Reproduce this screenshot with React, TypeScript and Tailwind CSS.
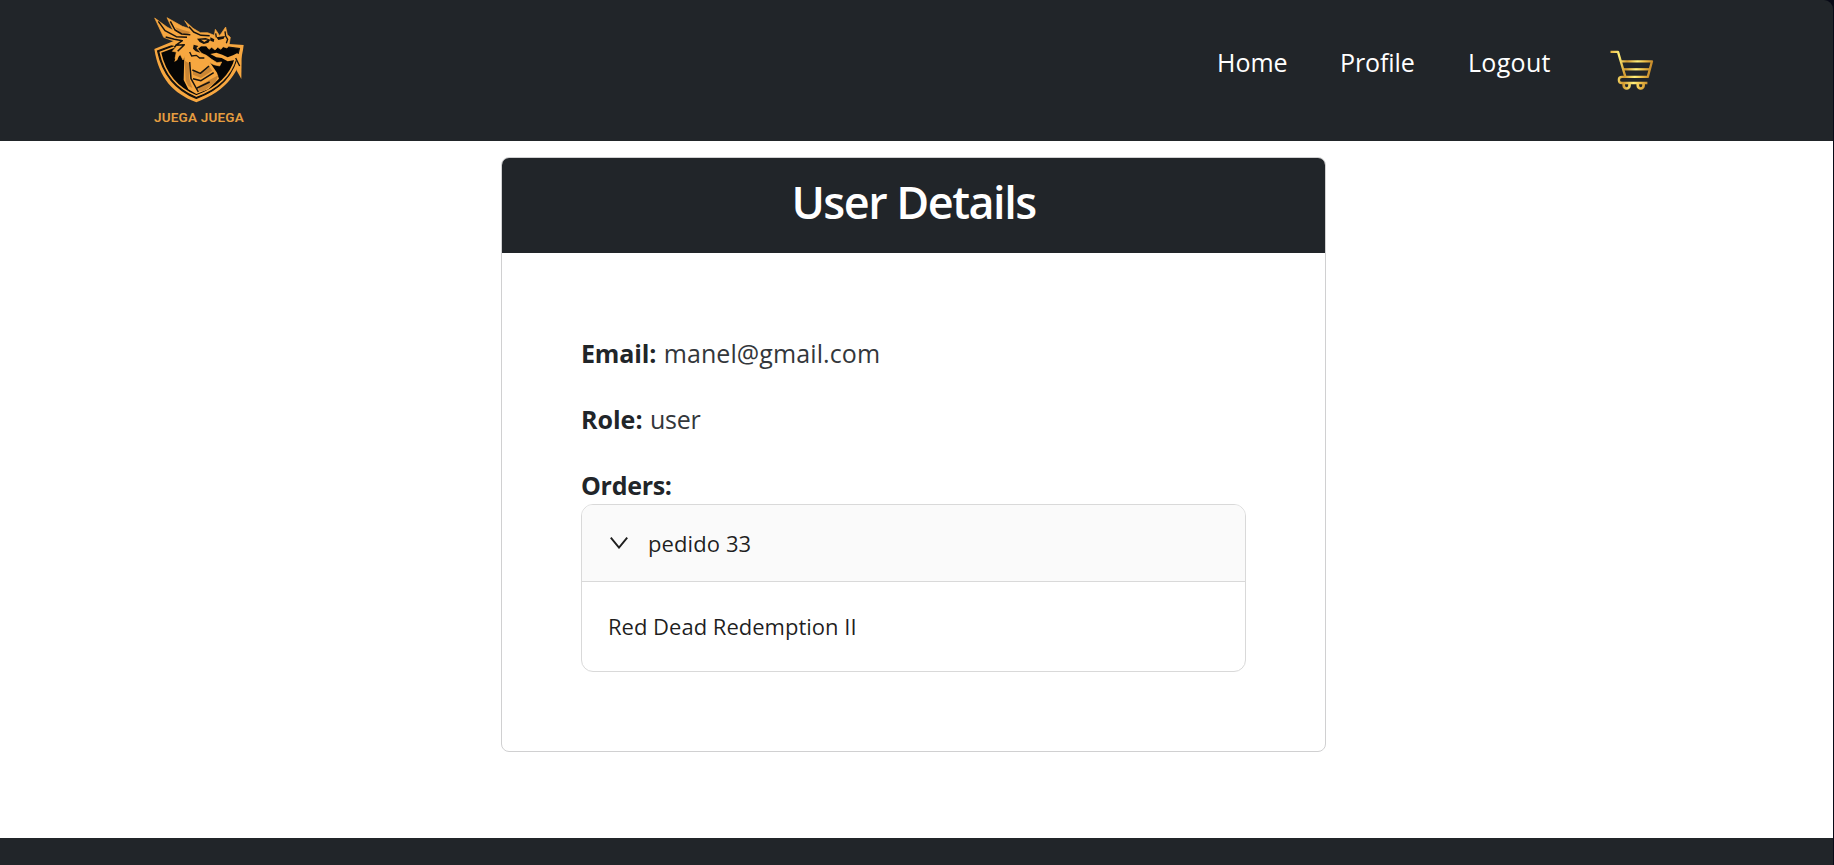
function DragonLogo({ className }: { className: string }) {
  return (
    <svg viewBox="0 0 270 258" className={className} role="img" aria-label="Juega Juega">
      <g transform="translate(-43 -37)">
        <path fill="#f7a740" d="M44 133 L100 110 L180 100 L268 118 L312 121 C304 200 262 258 170 293 C100 266 58 222 44 133 Z" />
        <path fill="#f7a740" d="M306 150 L305 223 L290 196 L284 160 Z" />
        <path
          fill="#050505"
          stroke="#16130f"
          strokeWidth="4"
          d="M108 119 L54 139 C69 208 108 256 170 281 C238 256 284 216 299 132 L272 128 L180 116 Z"
        />
        <path
          fill="none"
          stroke="#f7a740"
          strokeWidth="5"
          d="M104 127 L62 143 C76 206 112 250 170 274 C230 252 272 218 288 160"
        />
        <path fill="#f7a740" d="M134 150 L132 226 L146 254 L170 268 L206 254 L238 222 L232 204 L206 166 L178 160 Z" />
        <path fill="#c98534" d="M135 168 L148 176 L149 222 L158 250 L146 244 L138 228 Z M160 196 L182 206 L208 184 L218 198 L184 220 L160 210 Z M178 244 L216 222 L236 212 L228 232 L194 258 L176 260 Z" />
        <path
          fill="#f7a740"
          stroke="#f7a740"
          strokeWidth="2"
          d="M45 40 L82 67 L100 77 L82 39 L128 65 L150 72 L135 48 L160 71 L182 84 L204 84 L224 92 L227 74 L240 93 L258 67 L263 90 L272 98 L268 122 L262 130 L250 126 L244 134 L234 128 L226 136 L216 128 L208 134 L200 124 L184 124 L174 132 L186 146 L200 152 L216 164 L232 174 L246 172 L240 184 L222 180 L204 170 L192 174 L180 166 L166 172 L152 158 L146 172 L138 150 L130 166 L122 150 L106 162 L110 142 L98 140 L112 124 L92 120 L104 110 L72 98 Z"
        />
        <path fill="#f7a740" d="M212 148 L230 144 L248 150 L264 158 L280 152 L292 146 L302 150 L300 172 L286 166 L264 170 L246 160 L230 158 Z" />
        <path fill="#c98534" d="M106 68 L130 76 L152 82 L142 90 L122 86 Z" />
        <path
          fill="none"
          stroke="#16130f"
          strokeWidth="4.5"
          strokeLinejoin="round"
          d="M56 50 L76 78 L110 96 L142 98 M92 50 L106 76 L126 88 L152 90 M148 66 L162 82 L184 92 L210 93 M78 97 L104 104 L128 108 L108 122 L134 120 L114 140 M150 172 L154 222 L176 262 M158 196 L182 206 L208 184 M160 222 L184 228 L222 204 M172 250 L210 232"
        />
        <path fill="#16130f" d="M172 102 L198 100 L212 105 L206 114 L192 118 L180 112 Z M212 98 L224 104 L222 112 L212 108 Z M230 98 L256 94 L252 102 L236 106 Z M162 120 L176 124 L170 130 L182 144 L168 140 L160 132 Z" />
        <path fill="#f7a740" d="M184 105 L204 105 L194 112 Z" />
        <path fill="none" stroke="#16130f" strokeWidth="4" d="M256 80 L258 94 L264 104 L260 116 M228 86 L230 98 M288 160 L300 184 M150 142 L156 154 L170 152 L180 160 L194 160" />
        <path fill="#f7a740" d="M108 158 L119 150 L113 166 L104 172 Z" />
      </g>
    </svg>
  );
}

function CartIcon() {
  return (
    <svg viewBox="0 0 44 40" className="h-10 w-11" fill="none" role="img" aria-label="Cart">
      <defs>
        <linearGradient id="gold" x1="0" y1="0" x2="44" y2="8" gradientUnits="userSpaceOnUse">
          <stop offset="0" stopColor="#e5ad3a" />
          <stop offset="0.22" stopColor="#fff07a" />
          <stop offset="0.42" stopColor="#d39a30" />
          <stop offset="0.65" stopColor="#fff07a" />
          <stop offset="0.82" stopColor="#ecbb45" />
          <stop offset="1" stopColor="#c08428" />
        </linearGradient>
      </defs>
      <g stroke="url(#gold)" strokeWidth="2.3" strokeLinejoin="round">
        <path d="M0.5 1.9 H8 L15.4 26.8 M11 11.3 H42 L37.8 26.9 H12 C7.8 26.9 7.8 33 12 33 H37.4" />
        <path d="M13.2 19.3 H40" />
        <path d="M13.7 34 V35.6 A2.9 2.9 0 0 0 19.5 35.6 V34 M27.8 34 V35.6 A2.9 2.9 0 0 0 33.6 35.6 V34" strokeWidth="2.7" />
      </g>
    </svg>
  );
}

function Navbar() {
  return (
    <header className="flex h-[141px] justify-between rounded-tr-[9px] bg-[#212529] pl-[154px] pr-[179px]">
      <div className="flex w-[90px] flex-col items-center pt-[17px]">
        <DragonLogo className="h-[86px] w-[90px]" />
        <span className="mt-[6px] whitespace-nowrap font-['Roboto'] text-[13.5px] font-semibold leading-4 tracking-[0.2px] text-[#e59d40]">
          JUEGA JUEGA
        </span>
      </div>
      <nav className="flex items-start pt-[43px] text-[25px] leading-[38px] text-white">
        <a href="#home" className="w-[123px]">Home</a>
        <a href="#profile" className="w-[128px] tracking-[-0.1px]">Profile</a>
        <a href="#logout" className="w-[142px] tracking-[0.3px]">Logout</a>
        <a href="#cart" className="pt-[7px]">
          <CartIcon />
        </a>
      </nav>
    </header>
  );
}

function Orders() {
  return (
    <div className="overflow-hidden rounded-[12px] border border-[#d9d9d9] text-[22px] text-black/88">
      <div className="flex h-[77px] items-center border-b border-[#d9d9d9] bg-[#fafafa] pl-[28px]">
        <svg viewBox="0 0 18 12" className="h-3 w-[18px]" fill="none" stroke="#1f1f1f" strokeWidth="1.9">
          <path d="M0.8 0.6 L9 10.6 L17.2 0.6" />
        </svg>
        <span className="ml-[20px] tracking-[0.1px]">pedido 33</span>
      </div>
      <div className="flex h-[89px] items-center pb-[2px] pl-[26px]">Red Dead Redemption II</div>
    </div>
  );
}

function UserCard() {
  return (
    <section className="h-[595px] w-[825px] overflow-hidden rounded-[8px] border border-[#d0d0d1] bg-white">
      <div className="flex h-[95px] justify-center bg-[#212529] pt-[17px]">
        <h1 className="text-[45px] font-semibold leading-[54px] tracking-[-1.5px] text-white">User Details</h1>
      </div>
      <div className="px-[79px] pt-[81px] text-[25px] leading-[38px] text-[#212529]">
        <p className="mb-[28px]">
          <strong className="tracking-[-0.15px]">Email:</strong>{" "}
          <span className="ml-px tracking-[0.1px] text-[#33373b]">manel@gmail.com</span>
        </p>
        <p className="mb-[28px]">
          <strong>Role:</strong> <span className="ml-px tracking-[-0.3px] text-[#33373b]">user</span>
        </p>
        <p>
          <strong className="tracking-[-0.3px]">Orders:</strong>
        </p>
        <Orders />
      </div>
    </section>
  );
}

export default function App() {
  return (
    <div className="h-[865px] w-full overflow-hidden bg-[#080a16] pr-px font-['Open_Sans',sans-serif]">
      <Navbar />
      <main className="flex h-[697px] bg-white pl-[501px] pt-[16px]">
        <UserCard />
      </main>
      <footer className="h-[27px] bg-[#212529]" />
    </div>
  );
}
